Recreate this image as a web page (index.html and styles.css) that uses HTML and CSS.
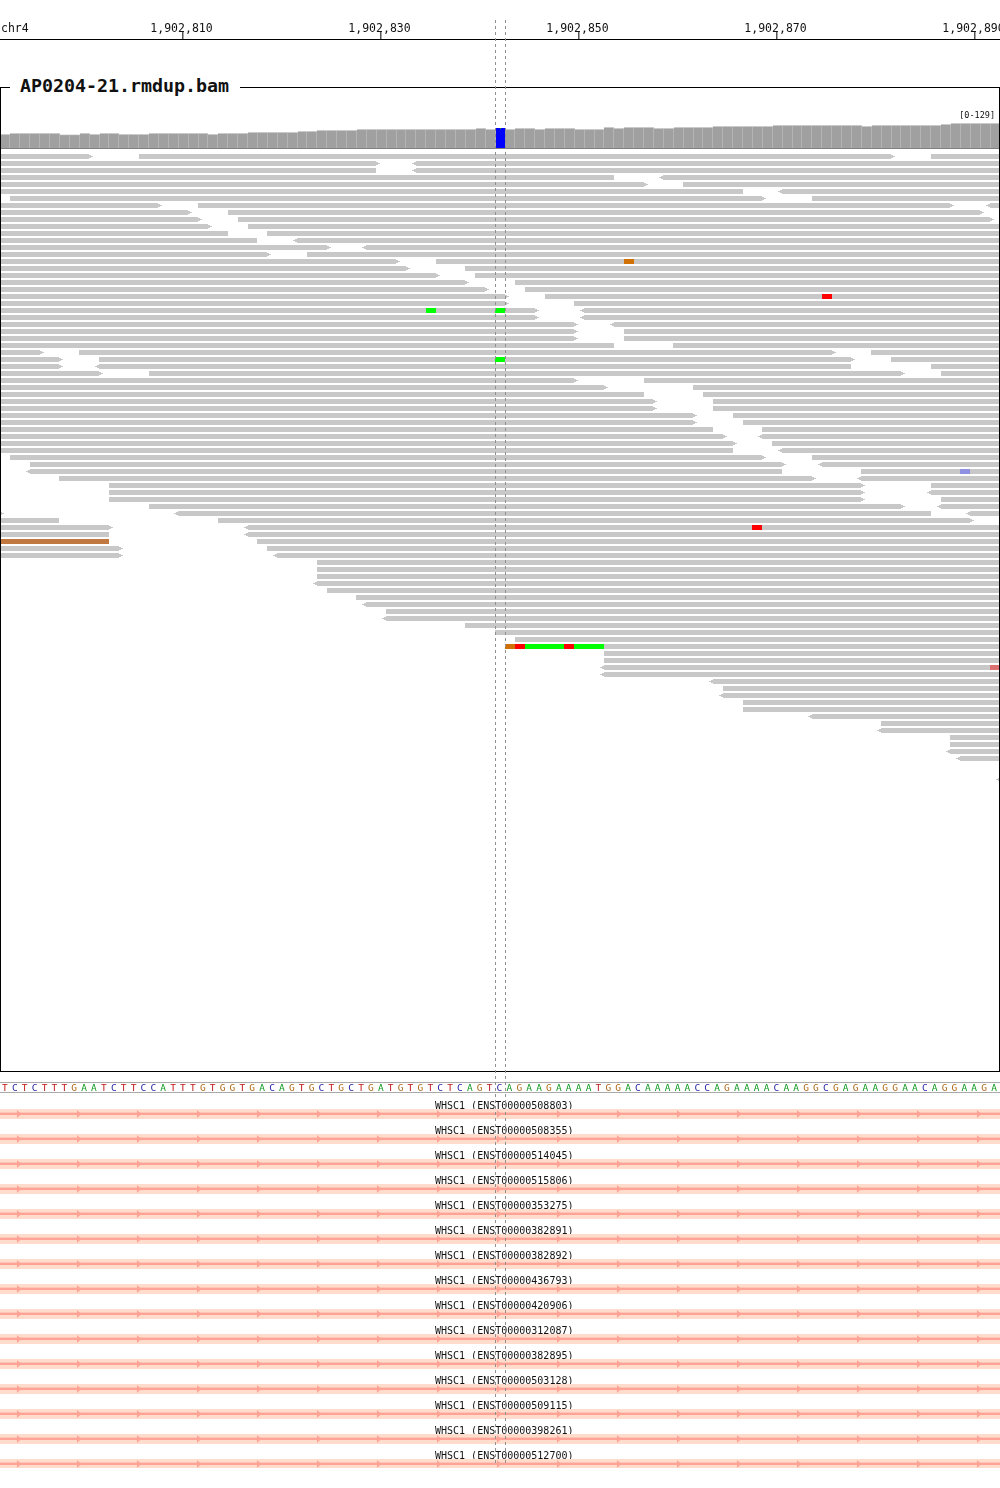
FILE: index.html
```html
<!DOCTYPE html>
<html lang="en">
<head>
    <meta charset="UTF-8">
    <meta name="viewport" content="width=device-width, initial-scale=1.0">
    <title>AP0204-21.rmdup.bam</title>
    <link rel="stylesheet" href="styles.css">
</head>
<body>

    <div class="browser">
        <div class="ruler">
            <span class="chrom">chr4</span>
            <span class="ruler-label" style="left: 182px">1,902,810</span>
            <span class="ruler-label" style="left: 380px">1,902,830</span>
            <span class="ruler-label" style="left: 578px">1,902,850</span>
            <span class="ruler-label" style="left: 776px">1,902,870</span>
            <span class="ruler-label" style="left: 974px">1,902,890</span>
        </div>

        <div class="alignment-track">
            <h2 class="track-title">AP0204-21.rmdup.bam</h2>
            <span class="data-range">[0-129]</span>
            <div id="coverage"></div>
            <div id="pileup"></div>
        </div>

        <div class="sequence" id="sequence"></div>

        <div class="genes" id="genes"></div>

        <div class="center-guide guide-left"></div>
        <div class="center-guide guide-right"></div>
    </div>

    <script src="track.js"></script>

</body>
</html>
```

FILE: styles.css
```css
html, body {
    margin: 0;
    padding: 0;
    background-color: white;
    overflow: hidden;
}
.browser {
    position: relative;
    width: 1000px;
    height: 1488px;
    overflow: hidden;
    font-family: "DejaVu Sans Mono", monospace;
    color: #111;
    will-change: opacity;
}

/* ruler */
.ruler {
    position: relative;
    box-sizing: border-box;
    height: 40px;
    border-bottom: 1px solid black;
    font-size: 11.5px;
    line-height: 14px;
}
.chrom {
    position: absolute;
    left: 1px;
    top: 21px;
}
.ruler-label {
    position: absolute;
    top: 21px;
    transform: translateX(calc(-50% - 0.5px));
    white-space: nowrap;
}
.ruler-label::after {
    content: "";
    position: absolute;
    left: calc(50% + 0.5px);
    top: 11px;
    width: 1px;
    height: 7px;
    background-color: black;
}

/* alignment track */
.alignment-track {
    position: relative;
    box-sizing: border-box;
    height: 985px;
    margin-top: 47px;
    border: 1px solid black;
}
.track-title {
    position: absolute;
    left: 9px;
    top: -13px;
    margin: 0;
    padding: 0 11px 0 10px;
    background-color: white;
    font-size: 18.3px;
    line-height: 22px;
    font-weight: bold;
    white-space: nowrap;
}
.data-range {
    position: absolute;
    right: 4px;
    top: 22px;
    font-size: 8.5px;
    line-height: 11px;
}
#coverage svg, #pileup svg {
    display: block;
}
.cov-under { fill: #b4b4b4; }
.cov-bar { fill: #a0a0a0; }
.cov-base { fill: #808080; }
.cov-snp { fill: #0000ff; }
.cov-alt { fill: #00c000; }
#pileup svg { shape-rendering: crispEdges; }
.read { fill: #c8c8c8; }
.mm-a { fill: #00ff00; }
.mm-t { fill: #ff0000; }
.mm-g { fill: #d17105; }
.mm-c { fill: #9090e0; }
.mm-pink { fill: #dc7070; }
.mm-brown { fill: #c07840; }

/* reference sequence */
.sequence {
    box-sizing: border-box;
    display: flex;
    height: 11px;
    margin-top: 10px;
    border-top: 1px solid #aaa;
    border-bottom: 1px solid #aaa;
    font-size: 9.5px;
    line-height: 9px;
}
.base {
    flex: 0 0 9.9px;
    text-align: center;
}
.base-A { color: #109a20; }
.base-C { color: #2828a8; }
.base-G { color: #b06a1c; }
.base-T { color: #c01818; }

/* gene tracks */
.genes {
    margin-top: 1px;
}
.gene {
    height: 25px;
}
.gene-label {
    height: 15px;
    box-sizing: border-box;
    padding: 5.5px 0 0 435px;
    font-size: 10px;
    line-height: 11px;
    white-space: nowrap;
}
.gene svg {
    display: block;
}
.gene:last-child svg {
    height: 9px;
}
.gene-band { fill: #ffdccc; }
.gene-line { fill: #ffa396; }

/* dashed lines on the centre base */
.center-guide {
    position: absolute;
    top: 20px;
    width: 1px;
    height: 1445px;
    background-image: repeating-linear-gradient(to bottom, #909090 0, #909090 3px, transparent 3px, transparent 6px);
}
.guide-left { left: 495px; }
.guide-right { left: 505px; }
```

FILE: track.js
```js
const BP = 9.9;

// [first base, top of the bar]
const COVERAGE = [
    [0, 134.3], [1, 133.3], [6, 134.7], [8, 133.3], [9, 134.3], [10, 133.3], [12, 134.3],
    [15, 133.3], [21, 134.3], [22, 133.3], [25, 132.3], [30, 131.3], [32, 130.3], [36, 129.3],
    [48, 128.3], [49, 129.3], [51, 129.3], [52, 128.3], [54, 129.3], [55, 128.3], [58, 129.3],
    [61, 127.3], [62, 128.3], [63, 127.3], [66, 128.3], [68, 127.3], [72, 126.3], [78, 125.3],
    [87, 126.3], [88, 125.3], [95, 124.3], [96, 123.3]
];

// one string per row, "<" and ">" mark the strand arrow
const ROWS = [
    "0-89> 139-891> 931-1000", "0-376> <416-1000", "0-376 <416-1000", "0-614 <663-1000",
    "0-644> 683-1000", "0-743 <782-1000", "10-762> 812-1000", "0-158> 198-950> <990-1000",
    "0-188> 228-980>", "0-198> 238-990>", "0-208> 248-1000", "0-228 267-1000",
    "0-257 <297-1000", "0-327> <366-1000", "0-267> 307-1000", "0-396> 436-1000",
    "0-406> 465-1000", "0-436> 475-1000", "0-465> 515-1000", "0-485> 525-1000",
    "0-505> 545-1000", "0-505> 574-1000", "0-535> <584-1000", "0-535> <584-1000",
    "0-574> <614-1000", "0-574> 624-1000", "0-574> 624-1000", "0-614 673-1000",
    "0-40> 79-832> 871-1000", "0-59> 99-851> 891-1000", "0-59> <99-851 931-1000",
    "0-99> 149-901> 941-1000", "0-574> 644-1000", "0-604> 693-1000", "0-644 703-1000",
    "0-653> 713-1000", "0-653> 713-1000", "0-693> 733-1000", "0-693> 743-1000",
    "0-713 762-1000", "0-723> <762-1000", "0-733> 772-1000", "0-733 <782-1000",
    "10-762> 812-1000", "30-782> <822-1000", "<30-782 861-1000", "59-812> <861-1000",
    "109-861> 931-1000", "109-861> <931-1000", "109-861> 941-1000", "149-901> <941-1000",
    "0-0> <178-931 <970-1000", "0-59 218-970>", "0-109> <248-1000", "0-109 <248-1000",
    "257-1000", "0-119> 267-1000", "0-119> <277-1000", "317-1000", "317-1000", "317-1000",
    "<317-1000", "327-1000", "356-1000", "<366-1000", "386-1000", "<386-1000", "465-1000",
    "495-1000", "515-1000", "505-1000", "604-1000", "604-1000", "<604-1000", "<604-1000",
    "<713-1000", "723-1000", "<723-1000", "743-1000", "743-1000", "<812-1000", "881-1000",
    "<881-1000", "950-1000", "950-1000", "<950-1000", "<960-1000", "", "", "<1000-1000"
];

// [row, from, to, colour class]
const MISMATCHES = [
    [15, 624, 634, "mm-g"], [20, 822, 832, "mm-t"], [22, 426, 436, "mm-a"], [22, 495, 505, "mm-a"],
    [29, 495, 505, "mm-a"], [45, 960, 970, "mm-c"], [53, 752, 762, "mm-t"], [55, 0, 109, "mm-brown"],
    [70, 505, 515, "mm-g"], [70, 515, 525, "mm-t"], [70, 525, 564, "mm-a"], [70, 564, 574, "mm-t"],
    [70, 574, 604, "mm-a"], [73, 990, 1000, "mm-pink"]
];

const SEQUENCE = "TCTCTTTGAATCTTCCATTTGTGGTGACAGTGCTGCTGATGTGTCTCAGTCAGAAGAAAATGGACAAAAACCAGAAAACAAGGCGAGAAGGAACAGGAAGA";

const GENES = [
    "ENST00000508803", "ENST00000508355", "ENST00000514045", "ENST00000515806", "ENST00000353275",
    "ENST00000382891", "ENST00000382892", "ENST00000436793", "ENST00000420906", "ENST00000312087",
    "ENST00000382895", "ENST00000503128", "ENST00000509115", "ENST00000398261", "ENST00000512700"
];

function rect(cls, x, y, w, h) {
    return `<rect class="${cls}" x="${x}" y="${y}" width="${w}" height="${h}"></rect>`;
}

function drawCoverage() {
    let under = "";
    let bars = "";
    for (let base = 0; base < 101; base++) {
        if (base === 50) continue;
        let top = 134;
        COVERAGE.forEach(run => {
            if (run[0] <= base) top = run[1];
        });
        const y = top - 88;
        const x = Math.round(base * BP + 0.5);
        const next = Math.round((base + 1) * BP + 0.5);
        under += rect("cov-under", x, y, next - x, 60 - y);
        bars += rect("cov-bar", x, y + 0.7, next - x - 1, 59.3 - y);
    }
    bars += rect("cov-snp", 496, 40, 9, 20);
    bars += rect("cov-alt", 500, 40, 1, 1);
    bars += rect("cov-base", 0, 60, 1000, 1);
    // page x is kept in the data, the viewBox drops the 1px border
    document.getElementById("coverage").innerHTML =
        `<svg width="998" height="61" viewBox="1 0 998 61">${under}${bars}</svg>`;
}

function drawRead(token, y) {
    const left = token.startsWith("<");
    const right = token.endsWith(">");
    const [from, to] = token.replace(/[<>]/g, "").split("-").map(Number);
    let out = rect("read", from, y, to - from, 5);
    if (left) {
        out += rect("read", from - 2, y + 1, 2, 3) + rect("read", from - 4, y + 2, 2, 1);
    }
    if (right) {
        out += rect("read", to, y + 1, 2, 3) + rect("read", to + 2, y + 2, 2, 1);
    }
    return out;
}

function drawPileup() {
    let reads = "";
    ROWS.forEach((row, i) => {
        const y = 5 + i * 7;
        row.split(" ").filter(Boolean).forEach(token => {
            reads += drawRead(token, y);
        });
    });
    MISMATCHES.forEach(m => {
        reads += rect(m[3], m[1], 5 + m[0] * 7, m[2] - m[1], 5);
    });
    document.getElementById("pileup").innerHTML =
        `<svg width="998" height="640" viewBox="1 0 998 640">${reads}</svg>`;
}

function drawSequence() {
    document.getElementById("sequence").innerHTML = SEQUENCE.split("")
        .map(b => `<span class="base base-${b}">${b}</span>`)
        .join("");
}

function drawGenes() {
    document.getElementById("genes").innerHTML = GENES.map(id => {
        let shapes = rect("gene-band", 0, 0, 1000, 10) + rect("gene-line", 0, 3.6, 1000, 2.4);
        for (let x = 17; x < 1000; x += 60) {
            const p = [[x, 1], [x + 2, 3], [x + 3.5, 4], [x + 3.5, 6], [x + 2, 7], [x, 9]];
            shapes += `<polygon class="gene-line" points="${p.join(" ")}"></polygon>`;
        }
        return `<div class="gene">
            <div class="gene-label">WHSC1 (${id})</div>
            <svg width="1000" height="10" viewBox="0 0 1000 10" preserveAspectRatio="xMinYMin slice">${shapes}</svg>
        </div>`;
    }).join("");
}

drawCoverage();
drawPileup();
drawSequence();
drawGenes();
```
